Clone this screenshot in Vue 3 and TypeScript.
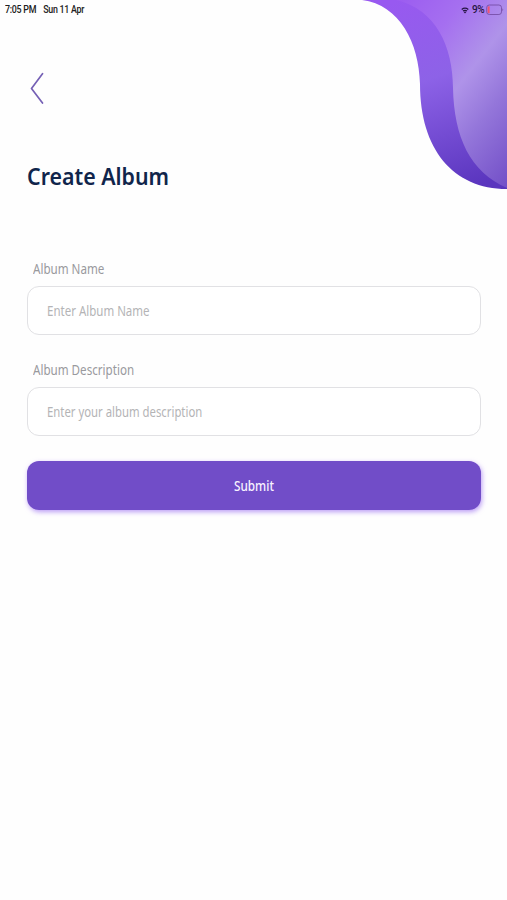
<script setup lang="ts">
import { ref } from 'vue'

const albumName = ref('')
const albumDescription = ref('')
</script>

<template>
  <main class="screen">
    <svg class="wave" viewBox="0 0 147 192" aria-hidden="true">
      <defs>
        <linearGradient id="outer" gradientUnits="userSpaceOnUse" x1="40" y1="0" x2="105" y2="190">
          <stop offset="0" stop-color="#9859f0" />
          <stop offset="0.42" stop-color="#8d62e7" />
          <stop offset="1" stop-color="#5a35be" />
        </linearGradient>
        <linearGradient id="inner" gradientUnits="userSpaceOnUse" x1="40" y1="0" x2="196" y2="122">
          <stop offset="0" stop-color="#9c5df0" />
          <stop offset="0.25" stop-color="#a56ff0" />
          <stop offset="0.5" stop-color="#af93e9" />
          <stop offset="0.7" stop-color="#9476da" />
          <stop offset="1" stop-color="#7350c8" />
        </linearGradient>
      </defs>
      <path fill="url(#outer)" d="M2 0C40 5 59 43 60 84C60 149 93 189 147 189V0Z" />
      <path fill="url(#inner)" d="M36 0C76 9 93 47 93 88C94 137 110 172 147 188V0Z" />
    </svg>

    <header class="status">
      <div class="when"><span>7:05 PM</span><span>Sun 11 Apr</span></div>
      <div class="power">
        <svg class="wifi" viewBox="0 0 8 7" aria-hidden="true">
          <path d="M.7 2.5Q4 -.1 7.3 2.5M2 4.1Q4 2.6 6 4.1" fill="none" stroke="#251442" stroke-width="1.3" />
          <path d="M2.7 5 4 6.6 5.3 5Q4 4.2 2.7 5Z" fill="#251442" />
        </svg>
        <span class="percent">9%</span>
        <svg class="battery" viewBox="0 0 18 12" aria-hidden="true">
          <rect x=".7" y="1" width="14.8" height="9.5" rx="2.6" fill="none" stroke="#70479f" stroke-width=".8" />
          <path d="M3.6 2.3V9.2H2.9Q1.6 9.2 1.6 8V3.5Q1.6 2.3 2.9 2.3Z" fill="#f05272" />
          <path d="M16.5 4.2Q18 5.7 16.5 7.3Z" fill="#70479f" />
        </svg>
      </div>
    </header>

    <button class="back" type="button" aria-label="Back">
      <svg viewBox="0 0 14 32" aria-hidden="true">
        <path d="M12.5 1.7 1.5 16.5 12.5 31" fill="none" stroke="#7560b5" stroke-width="1.7" stroke-linecap="round" stroke-linejoin="round" />
      </svg>
    </button>

    <h1><span>Create Album</span></h1>

    <form @submit.prevent>
      <label for="name"><span class="name-label">Album Name</span></label>
      <div class="field"><input id="name" v-model="albumName" class="name-input" placeholder="Enter Album Name" /></div>
      <label for="description"><span class="desc-label">Album Description</span></label>
      <div class="field"><input id="description" v-model="albumDescription" class="desc-input" placeholder="Enter your album description" /></div>
      <button class="submit" type="submit"><span>Submit</span></button>
    </form>
  </main>
</template>

<style>
body {
  background: #fefefe;
}
</style>

<style scoped>
.screen {
  position: relative;
  box-sizing: border-box;
  min-height: 900px;
  padding: 0 26px 0 27px;
  overflow: hidden;
  font-family: "Noto Sans", sans-serif;
}
.wave {
  position: absolute;
  top: 0;
  right: 0;
  width: 147px;
  height: 192px;
}
.status {
  position: relative;
  display: flex;
  justify-content: space-between;
  height: 20px;
  margin: 0 -23px 0 -22px;
  font: 500 10px/20px Roboto, sans-serif;
  color: #202020;
}
.when {
  display: flex;
  gap: 8px;
  letter-spacing: -0.3px;
  transform: scaleX(0.885);
  transform-origin: left center;
}
.power {
  display: flex;
  align-items: center;
  color: #251442;
}
.wifi {
  width: 8px;
  height: 7px;
  margin-right: 3px;
}
.percent {
  width: 14px;
  letter-spacing: -0.5px;
}
.battery {
  width: 18px;
  height: 12px;
}
button {
  padding: 0;
  border: 0;
  font-family: inherit;
}
.back {
  display: block;
  width: 14px;
  height: 32px;
  margin: 52px 0 0 3px;
  background: none;
}
.back svg {
  display: block;
  width: 14px;
  height: 32px;
}
span {
  white-space: nowrap;
}
h1 {
  height: 36px;
  margin: 54px 0 0;
  font-size: 24px;
  font-weight: 600;
  line-height: 36px;
  color: #10254b;
}
h1 span,
label span {
  display: inline-block;
  transform-origin: left center;
}
h1 span {
  transform: scaleX(0.89);
}
form {
  margin-top: 64px;
}
label {
  display: block;
  height: 22px;
  margin-bottom: 6px;
  padding-left: 6px;
  font-size: 13.5px;
  line-height: 22px;
  color: #99999d;
}
.name-label,
.desc-label {
  transform: scaleX(0.86);
}
.field {
  box-sizing: border-box;
  height: 49px;
  margin-bottom: 24px;
  padding: 0 19px;
  overflow: hidden;
  border: 1.5px solid #e1e1e4;
  border-radius: 12px;
  background: #fff;
}
input {
  width: 110%;
  height: 47px;
  padding: 0;
  border: 0;
  outline: 0;
  background: none;
  font: 13.5px "Noto Sans", sans-serif;
  color: #555;
  transform-origin: left center;
}
.name-input {
  transform: scaleX(0.852);
}
.desc-input {
  transform: scaleX(0.84);
}
input::placeholder {
  color: #b4b4b6;
  opacity: 1;
}
.submit {
  width: 100%;
  height: 49px;
  margin-top: 1px;
  border-radius: 12px;
  background: #714dc8;
  box-shadow: 1px 2px 5px #9b6cf1aa;
  font-size: 13.5px;
  font-weight: 500;
  color: #f8f3ff;
}
.submit span {
  display: inline-block;
  transform: scaleX(0.87);
}
</style>
